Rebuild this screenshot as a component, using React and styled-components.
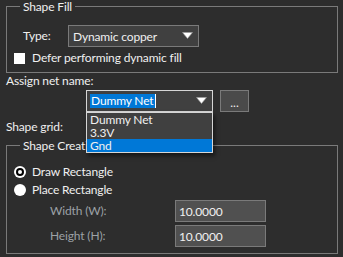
import styled, { createGlobalStyle } from "styled-components";

const GlobalStyle = createGlobalStyle`
  html, body {
    margin: 0;
    padding: 0;
    background: #2d2d2d;
  }
  body {
    font-family: Lato, "Noto Sans", sans-serif;
    font-size: 12px;
    letter-spacing: -0.15px;
    color: #f0f0f0;
  }
`;

// 전체 패널
const Panel = styled.div`
  width: 343px;
  height: 257px;
  box-sizing: border-box;
  padding: 0 5px 0 6px;
  background: #2d2d2d;
  overflow: hidden;
`;

const Group = styled.fieldset`
  margin: ${({ $top }) => $top || 0}px 0 0 0;
  padding: ${({ $padTop }) => $padTop}px 0 6px 7px;
  border: 1px solid #7a7a7a;
  min-width: 0;
`;

const Legend = styled.legend`
  padding: 0 3px;
  margin-left: 6px;
  line-height: 12px;
  font-size: 12px;
  color: #f0f0f0;
  position: relative;
  top: 1px;
`;

const Row = styled.div`
  display: flex;
  align-items: center;
  height: ${({ $h }) => $h || 16}px;
  margin-top: ${({ $mt }) => $mt || 0}px;
  padding-left: ${({ $pl }) => $pl || 0}px;
`;

const Label = styled.span`
  line-height: 16px;
  color: ${({ $disabled }) => ($disabled ? "#9ca1a6" : "#f0f0f0")};
  width: ${({ $w }) => ($w ? `${$w}px` : "auto")};
  flex-shrink: 0;
`;

const Text = styled.div`
  line-height: 16px;
  height: 16px;
  margin-top: ${({ $mt }) => $mt || 0}px;
`;

const Select = styled.div`
  position: relative;
  display: flex;
  align-items: center;
  box-sizing: border-box;
  width: ${({ $w }) => $w}px;
  height: 22px;
  padding-left: ${({ $pl }) => $pl || 4}px;
  background: #404040;
  border: 1px solid ${({ $focus }) => ($focus ? "#d6d6d6" : "#7a7a7a")};
`;

const ArrowBox = styled.span`
  position: absolute;
  right: 5px;
  top: 6px;
  display: flex;
`;

const Selected = styled.span`
  background: #0078d7;
  color: #ffffff;
  line-height: 14px;
  padding: 0 1px;
`;

const Caret = styled.span`
  display: inline-block;
  width: 1px;
  height: 14px;
  background: #ffffff;
`;

const DropList = styled.div`
  position: absolute;
  left: -1px;
  top: 21px;
  width: ${({ $w }) => $w}px;
  box-sizing: border-box;
  border: 1px solid #d6d6d6;
  background: #404040;
  box-shadow: 2px 3px 4px rgba(0, 0, 0, 0.5);
  z-index: 2;
`;

const DropItem = styled.div`
  height: 13px;
  line-height: 13px;
  padding-left: 3px;
  background: ${({ $active }) => ($active ? "#0078d7" : "transparent")};
  color: #f0f0f0;
`;

const SmallButton = styled.button`
  box-sizing: border-box;
  width: 29px;
  height: 22px;
  margin-left: 7px;
  padding: 3px 0 0;
  background: #4a4a4a;
  border: 1px solid #7a7a7a;
  color: #f0f0f0;
  font: inherit;
  font-size: 12px;
  line-height: 12px;
`;

const CheckBox = styled.span`
  display: inline-block;
  width: 11px;
  height: 11px;
  background: #ffffff;
  margin-right: 7px;
`;

const Radio = styled.span`
  position: relative;
  display: inline-block;
  width: 12px;
  height: 12px;
  border-radius: 50%;
  background: #ffffff;
  margin-right: 6px;

  &::after {
    content: "";
    display: ${({ $checked }) => ($checked ? "block" : "none")};
    position: absolute;
    left: 2px;
    top: 2px;
    width: 4px;
    height: 4px;
    border-radius: 50%;
    border: 2px solid #000000;
    background: #ffffff;
  }
`;

const Input = styled.div`
  box-sizing: border-box;
  width: 91px;
  height: 22px;
  padding-left: 3px;
  display: flex;
  align-items: center;
  background: #505050;
  border: 1px solid #7a7a7a;
  color: #f0f0f0;
`;

const TriangleIcon = () => (
  <svg width="11" height="7" viewBox="0 0 11 7">
    <polygon points="0.5,0.5 10.5,0.5 5.5,6.5" fill="#ffffff" stroke="#9a9a9a" strokeWidth="0.6" />
  </svg>
);

export default function App() {
  return (
    <>
      <GlobalStyle />
      <Panel>
        <Group $padTop={13}>
          <Legend>Shape Fill</Legend>
          <Row $h={22} $pl={9}>
            <Label $w={45}>Type:</Label>
            <Select $w={131}>
              Dynamic copper
              <ArrowBox>
                <TriangleIcon />
              </ArrowBox>
            </Select>
          </Row>
          <Row $mt={3}>
            <CheckBox />
            <Label>Defer performing dynamic fill</Label>
          </Row>
        </Group>

        <Text>Assign net name:</Text>
        <Row $h={22} $mt={1} $pl={80}>
          <Select $w={127} $focus $pl={3}>
            <Selected>Dummy Net</Selected>
            <Caret />
            <ArrowBox>
              <TriangleIcon />
            </ArrowBox>
            <DropList $w={127}>
              <DropItem>Dummy Net</DropItem>
              <DropItem>3.3V</DropItem>
              <DropItem $active>Gnd</DropItem>
            </DropList>
          </Select>
          <SmallButton>...</SmallButton>
        </Row>

        <Text $mt={7}>Shape grid:</Text>

        <Group $top={4} $padTop={13}>
          <Legend>Shape Creation</Legend>
          <Row>
            <Radio $checked />
            <Label>Draw Rectangle</Label>
          </Row>
          <Row $mt={2}>
            <Radio />
            <Label>Place Rectangle</Label>
          </Row>
          <Row $h={22} $mt={2} $pl={36}>
            <Label $w={125} $disabled>Width (W):</Label>
            <Input>10.0000</Input>
          </Row>
          <Row $h={22} $mt={3} $pl={36}>
            <Label $w={125} $disabled>Height (H):</Label>
            <Input>10.0000</Input>
          </Row>
        </Group>
      </Panel>
    </>
  );
}
